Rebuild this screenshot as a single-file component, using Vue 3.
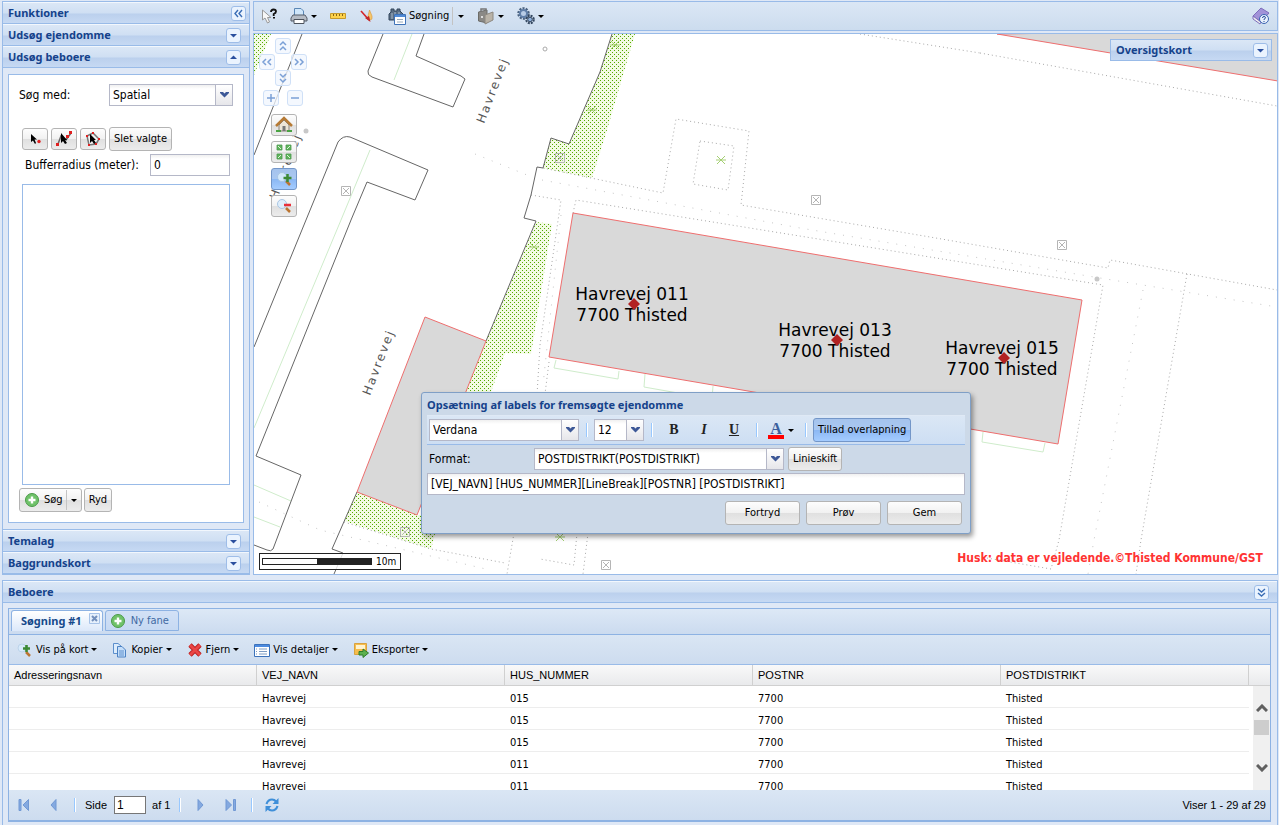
<template>
  <div class="viewport">
    <div class="top-row">
      <!-- Functions accordion -->
      <aside class="functions">
        <header class="panel-header">
          <h2>Funktioner</h2>
          <button class="tool-btn" aria-label="Skjul">
            <svg width="15" height="15" viewBox="0 0 15 15"><path d="M7 4L4 7.500L7 11M11 4L8 7.500L11 11" class="chevron" /></svg>
          </button>
        </header>
        <div class="accordion">
          <header class="panel-header">
            <h2>Udsøg ejendomme</h2>
            <button class="tool-btn" aria-label="Udvid Udsøg ejendomme">
              <svg width="15" height="15" viewBox="0 0 15 15"><path d="M4 6H11L7.500 9.500Z" class="arrow" /></svg>
            </button>
          </header>
          <header class="panel-header">
            <h2>Udsøg beboere</h2>
            <button class="tool-btn" aria-label="Skjul Udsøg beboere">
              <svg width="15" height="15" viewBox="0 0 15 15"><path d="M4 9H11L7.500 5.500Z" class="arrow" /></svg>
            </button>
          </header>
          <form class="search-form" @submit.prevent>
            <div class="search-box">
              <div class="field-row">
                <label for="search-mode">Søg med:</label>
                <div class="combo mode-combo">
                  <select id="search-mode" v-model="searchMode">
                    <option>Spatial</option>
                  </select>
                  <span class="trigger"><svg width="9" height="6" viewBox="0 0 9 6"><path d="M0 0H3L4.500 1.500L6 0H9V1L4.500 5.500L0 1Z" /></svg></span>
                </div>
              </div>
              <div class="select-tools">
                <button type="button" class="btn icon-btn" aria-label="Vælg punkt">
                  <svg width="18" height="16" viewBox="0 0 18 16">
                    <path d="M5 3V11L7 9.500L9 13L10 12L8.500 8.500H11Z" fill="#000" /><circle cx="13" cy="10.500" r="1.700" fill="#e02020" />
                  </svg>
                </button>
                <button type="button" class="btn icon-btn" aria-label="Vælg linje">
                  <svg width="18" height="16" viewBox="0 0 18 16">
                    <path d="M3 13L6 5L11 9L16 2" fill="none" stroke="#666" stroke-width="1.500" />
                    <path d="M6 2V12L8 10L10 13L12 12L10 9H12Z" fill="#000" />
                    <path d="M1 12H4V15H1ZM11 4H14V7H11ZM14 0H17V3H14Z" fill="#e02020" />
                  </svg>
                </button>
                <button type="button" class="btn icon-btn" aria-label="Vælg polygon">
                  <svg width="18" height="16" viewBox="0 0 18 16">
                    <path d="M3 5L9 2L15 8L12 13L5 14Z" fill="#f2f2f2" stroke="#777" stroke-width="1.500" />
                    <path d="M6 3V12L8 10L10 13L12 12L10 9H12Z" fill="#000" />
                    <path d="M2 4H4V6H2ZM8 1H10V3H8ZM14 7H16V9H14ZM11 12H13V14H11ZM4 13H6V15H4Z" fill="#e02020" />
                  </svg>
                </button>
                <button type="button" class="btn">Slet valgte</button>
              </div>
              <div class="field-row buffer-row">
                <label for="buffer">Bufferradius (meter):</label>
                <input id="buffer" v-model="buffer" type="text" class="text-field" />
              </div>
              <div class="result-list"></div>
              <div class="search-actions">
                <div class="split-btn btn">
                  <button type="submit" class="split-main">
                    <svg width="16" height="16" viewBox="0 0 16 16">
                      <circle cx="8" cy="8" r="6.500" fill="#6fc269" stroke="#4b9a49" /><path d="M8 4.500V11.500M4.500 8H11.500" stroke="#fff" stroke-width="2.400" />
                    </svg>
                    Søg
                  </button>
                  <button type="button" class="split-arrow" aria-label="Flere søgninger"><i class="caret"></i></button>
                </div>
                <button type="button" class="btn">Ryd</button>
              </div>
            </div>
          </form>
          <header v-for="title in ['Temalag', 'Baggrundskort']" :key="title" class="panel-header">
            <h2>{{ title }}</h2>
            <button class="tool-btn" :aria-label="'Udvid ' + title">
              <svg width="15" height="15" viewBox="0 0 15 15"><path d="M4 6H11L7.500 9.500Z" class="arrow" /></svg>
            </button>
          </header>
        </div>
      </aside>

      <main class="map-column">
        <nav class="main-toolbar">
          <button class="flat-btn" aria-label="Info">
            <svg width="16" height="16" viewBox="0 0 16 16">
              <path d="M1.500 2V12L4 10L6.500 15L8.500 14L6.500 9.500H10Z" fill="#f7f7f7" stroke="#999" />
              <path d="M10 4Q10 1.500 12.500 1.500Q15 1.500 15 3.500Q15 5 12.700 6V8" fill="none" stroke="#111" stroke-width="1.800" /><path d="M12 9H14V10.500H12Z" fill="#111" />
            </svg>
          </button>
          <button class="flat-btn" aria-label="Udskriv">
            <svg width="18" height="18" viewBox="0 0 18 18">
              <path d="M4.500 1.500H11L13.500 4V9H4.500Z" fill="#cfe6fa" stroke="#5b87b5" />
              <path d="M3 8H15L17 11V14H1V11Z" fill="#b5bbc4" stroke="#555d68" /><path d="M4 12.500H14V16.500H4Z" fill="#fff" stroke="#4d535c" />
            </svg>
            <i class="caret"></i>
          </button>
          <button class="flat-btn" aria-label="Mål">
            <svg width="16" height="16" viewBox="0 0 16 16">
              <path d="M0.500 5.500H15.500V10.500H0.500Z" fill="#fdd24c" stroke="#c59a2c" /><path d="M3.500 6V8M6.500 6V8M9.500 6V8M12.500 6V8" stroke="#8a6512" />
            </svg>
          </button>
          <button class="flat-btn" aria-label="Tegn">
            <svg width="16" height="16" viewBox="0 0 16 16">
              <path d="M2 3L10 12" stroke="#d3242a" stroke-width="1.600" /><path d="M9 8L10.500 2L13 8Q13.500 12 11.500 12Z" fill="#f5c76b" stroke="#d9963a" stroke-width="0.600" /><path d="M10 8L11.500 14L6 10Z" fill="#c22727" />
            </svg>
          </button>
          <button class="flat-btn">
            <svg width="18" height="18" viewBox="0 0 18 18">
              <path d="M3 2H6V4H9V2H12V4L15 7V13H1V7L3 5Z" fill="#5b6e84" stroke="#33475c" /><path d="M4 6V12M7 5V9M11 5V8" stroke="#a8bacd" />
              <path d="M6.500 7.500H17.500V17.500H6.500Z" fill="#fff" stroke="#3f73b8" /><path d="M7 8H17V10H7Z" fill="#4f8ad6" /><path d="M9 12.500H15M9 15H15" stroke="#9ab" />
            </svg>
            <span>Søgning</span>
            <i class="divider"></i>
            <i class="caret"></i>
          </button>
          <button class="flat-btn" aria-label="Værktøjer">
            <svg width="18" height="18" viewBox="0 0 18 18">
              <path d="M1.500 5L10 3V16L1.500 14Z" fill="#8a8986" stroke="#6c6c68" /><path d="M4 5V2H9V4" fill="none" stroke="#777" stroke-width="1.500" />
              <path d="M8 8L16 5V13L8 17Z" fill="#b9b3a8" stroke="#8d8880" /><path d="M4 9H6V11H4Z" fill="#ddd" />
            </svg>
            <i class="caret"></i>
          </button>
          <button class="flat-btn" aria-label="Indstillinger">
            <svg width="18" height="18" viewBox="0 0 18 18">
              <circle cx="6.500" cy="6.500" r="5" fill="none" stroke="#48607e" stroke-width="2.500" stroke-dasharray="2 1.140" /><circle cx="6.500" cy="6.500" r="3.500" fill="#b8cce6" stroke="#5f7ea8" stroke-width="2" />
              <circle cx="13" cy="12.500" r="3.800" fill="none" stroke="#33465f" stroke-width="2" stroke-dasharray="2 1" /><circle cx="13" cy="12.500" r="2.300" fill="#8fb0da" stroke="#33465f" />
            </svg>
            <i class="caret"></i>
          </button>
          <button class="flat-btn help" aria-label="Hjælp">
            <svg width="18" height="18" viewBox="0 0 18 18">
              <path d="M1 9L9 1L17 6L9 15Z" fill="#a192d8" stroke="#7d6dbb" /><path d="M1 9V12L8 17L9 15Z" fill="#eee" stroke="#7d6dbb" />
              <circle cx="12" cy="12" r="4.500" fill="#e8f0fc" stroke="#3a63b0" /><path d="M10.500 11Q10.500 9.500 12 9.500Q13.500 9.500 13.500 10.800Q13.500 11.600 12 12.300V13M12 14V15" fill="none" stroke="#234a96" />
            </svg>
          </button>
        </nav>

        <section class="map">
          <svg class="map-canvas" width="100%" height="100%">
            <defs>
              <pattern id="grass" width="4" height="4" patternUnits="userSpaceOnUse">
                <rect width="4" height="4" fill="#f3fbe4" />
                <path d="M0 0H1V1H0ZM2 2H3V3H2Z" fill="#55aa00" shape-rendering="crispEdges" />
              </pattern>
              <g id="manhole" fill="none" stroke="#b5b5b5">
                <path d="M-4.500 -4.500H4.500V4.500H-4.500ZM-3 -3L3 3M3 -3L-3 3" />
              </g>
              <path id="tree" d="M-4 -4L4 4M4 -4L-4 4M-5 0H5" fill="none" stroke="#a4cf72" />
            </defs>
            <!-- drawn in screen coordinates, moved back by the map's own origin -->
            <g transform="translate(-254 -34)">
              <g fill="url(#grass)">
                <path d="M254 34H271L254 75Z" />
                <path d="M612 34H635L620 85L607 130L592 178L543 168L551 138L569 144L600 72Z" />
                <path d="M536 222L552 224L531 354L505 353L488 400L460 404L486 341Z" />
                <path d="M357 492L417 515L440 515L431 549L344 521Z" />
              </g>
              <g fill="none" stroke="#cfeccb">
                <path d="M412 34L394 80M370 150L341 220L254 428M254 485L291 501M254 517L280 527" />
                <path d="M556 360L554 368L618 379L619 371M645 374L644 387L712 399L713 386M983 432L982 442L1043 452L1045 443" />
              </g>
              <g fill="none" stroke="#a8a8a8" stroke-dasharray="1 3">
                <path d="M543 168L663 193L676 119L749 131L741 205L930 237L1108 268L1110 260L1277 290" />
                <path d="M700 141L734 146L728 190L693 184Z" />
                <path d="M531 195L561 200L540 345L537 395M573 213L576 200L930 257L1103 285L1059 540L1051 569L975 556" />
                <path d="M980 53L1277 106M860 34L980 53M1187 274L1141 540L1136 574" />
                <path d="M344 522L431 549L505 563M549 362L545 394M514 533L507 574M577 533L574 565L540 559M588 533L583 574" />
              </g>
              <g fill="none" stroke="#c6c6c6" stroke-dasharray="1 8">
                <path d="M475 154L527 175M542 180L800 228L1100 278L1277 307M259 502L320 530L490 570" />
                <path d="M561 215L543 385M1143 290L1094 540L1088 574" />
              </g>
              <g fill="none" stroke="#666">
                <path d="M302 34L254 155" />
                <path d="M383 34L368 71Q367 75 372 77L453 107L465 79L461 76L416 56L424 34" />
                <path d="M254 347L306 220L338 142Q343 135 350 137L428 170L415 200L367 182L351 220L256 456L301 475L273 549Q271 552 267 550L254 545" />
                <path d="M612 34L600 72L569 144L551 138L543 168L537 167L531 195L524 218L536 221L486 341M357 492L332 549L343 553L334 574" />
              </g>
              <g fill="#d9d9d9" stroke="#ee6e6e">
                <path d="M997 34L1278 81V30Z" />
                <path d="M573 213L1082 300L1058 444L549 357Z" />
                <path d="M425 317L486 341L417 515L357 492Z" />
              </g>
              <use v-for="(m, i) in manholes" :key="'m' + i" href="#manhole" :x="m[0]" :y="m[1]" />
              <use v-for="(t, i) in trees" :key="'t' + i" href="#tree" :x="t[0]" :y="t[1]" />
              <circle cx="306" cy="131" r="2.500" fill="#c8c8c8" />
              <circle cx="1097" cy="279" r="2.500" fill="#c8c8c8" />
              <circle cx="545" cy="49" r="2" fill="none" stroke="#aaa" />
              <text v-for="(s, i) in streets" :key="'s' + i" class="street" :transform="`translate(${s[0]} ${s[1]}) rotate(-69)`">Havrevej</text>
              <g v-for="p in properties" :key="p.number" class="property">
                <text :x="p.x" :y="p.y - 3">Havrevej {{ p.number }}</text>
                <text :x="p.x" :y="p.y + 18">7700 Thisted</text>
                <path :d="`M${p.x + 2} ${p.y - 5}l6 6l-6 6l-6 -6Z`" />
              </g>
            </g>
          </svg>

          <div class="pan-pad">
            <button v-for="p in panButtons" :key="p.name" class="pan-btn" :class="p.name" :aria-label="p.label">
              <svg width="14" height="14" viewBox="0 0 14 14"><path :d="p.d" /></svg>
            </button>
          </div>
          <div class="map-tools">
            <button class="btn icon-btn" aria-label="Hjem">
              <svg width="18" height="18" viewBox="0 0 18 18">
                <path d="M4 9L9 4L14 9V15H4Z" fill="#ece4d6" stroke="#8a8378" /><path d="M1 10L9 2L17 10" fill="none" stroke="#b67a35" stroke-width="2.500" />
                <path d="M7.500 10H10.500V15H7.500Z" fill="#777" /><path d="M1 14H6V16H1ZM12 14H17V16H12Z" fill="#4aa343" />
              </svg>
            </button>
            <button class="btn icon-btn" aria-label="Hele kortet">
              <svg width="18" height="18" viewBox="0 0 18 18">
                <path d="M2 2H7V7H2ZM11 2H16V7H11ZM2 11H7V16H2ZM11 11H16V16H11Z" fill="#5fb45b" stroke="#4b9a4e" stroke-width="0.800" /><path d="M3 3L6 6M15 3L12 6M3 15L6 12M15 15L12 12" stroke="#dff3dc" />
              </svg>
            </button>
            <button class="btn icon-btn pressed" aria-label="Zoom ind">
              <svg width="18" height="16" viewBox="0 0 18 16">
                <circle cx="7" cy="6" r="4.500" fill="#d2e8fb" stroke="#a9c6e4" /><path d="M11 10L15 14" stroke="#bb7431" stroke-width="2.500" /><path d="M12.500 3V11M8.500 7H16.500" stroke="#3c8a35" stroke-width="2.500" />
              </svg>
            </button>
            <button class="btn icon-btn" aria-label="Zoom ud">
              <svg width="18" height="16" viewBox="0 0 18 16">
                <circle cx="7" cy="6" r="4.500" fill="#dfeefb" stroke="#a9c6e4" /><path d="M11 10L15 14" stroke="#bb7431" stroke-width="2.500" /><path d="M9 7H16" stroke="#e8303a" stroke-width="2.500" />
              </svg>
            </button>
          </div>

          <header class="overview panel-header">
            <h2>Oversigtskort</h2>
            <button class="tool-btn" aria-label="Udvid Oversigtskort">
              <svg width="15" height="15" viewBox="0 0 15 15"><path d="M4 6H11L7.500 9.500Z" class="arrow" /></svg>
            </button>
          </header>

          <div class="scale"><span class="scale-bar"></span>10m</div>
          <p class="disclaimer">Husk: data er vejledende.©Thisted Kommune/GST</p>

          <!-- Label setup window -->
          <div class="dialog" role="dialog" aria-labelledby="dialog-title">
            <h2 id="dialog-title">Opsætning af labels for fremsøgte ejendomme</h2>
            <div class="format-toolbar">
              <div class="combo font-combo">
                <select v-model="font" aria-label="Skrifttype"><option>Verdana</option></select>
                <span class="trigger"><svg width="9" height="6" viewBox="0 0 9 6"><path d="M0 0H3L4.500 1.500L6 0H9V1L4.500 5.500L0 1Z" /></svg></span>
              </div>
              <i class="separator"></i>
              <div class="combo size-combo">
                <select v-model="fontSize" aria-label="Størrelse"><option>12</option></select>
                <span class="trigger"><svg width="9" height="6" viewBox="0 0 9 6"><path d="M0 0H3L4.500 1.500L6 0H9V1L4.500 5.500L0 1Z" /></svg></span>
              </div>
              <i class="separator"></i>
              <button class="style-btn bold">B</button>
              <button class="style-btn italic">I</button>
              <button class="style-btn underline">U</button>
              <i class="separator"></i>
              <button class="color-btn" aria-label="Farve"><span>A</span><i class="caret"></i></button>
              <i class="separator"></i>
              <button class="btn pressed">Tillad overlapning</button>
            </div>
            <div class="format-row">
              <label for="format">Format:</label>
              <div class="combo">
                <select id="format" v-model="format"><option>POSTDISTRIKT(POSTDISTRIKT)</option></select>
                <span class="trigger"><svg width="9" height="6" viewBox="0 0 9 6"><path d="M0 0H3L4.500 1.500L6 0H9V1L4.500 5.500L0 1Z" /></svg></span>
              </div>
              <button class="btn">Linieskift</button>
            </div>
            <input v-model="template" type="text" class="text-field template-field" aria-label="Labelskabelon" />
            <div class="dialog-actions">
              <button class="btn">Fortryd</button>
              <button class="btn">Prøv</button>
              <button class="btn">Gem</button>
            </div>
          </div>
        </section>
      </main>
    </div>

    <!-- Residents grid -->
    <section class="residents">
      <header class="panel-header">
        <h2>Beboere</h2>
        <button class="tool-btn" aria-label="Skjul Beboere">
          <svg width="15" height="15" viewBox="0 0 15 15"><path d="M4 4L7.500 7L11 4M4 8L7.500 11L11 8" class="chevron" /></svg>
        </button>
      </header>
      <div class="tab-panel">
        <div class="tabs">
          <div class="tab active">
            <button class="tab-label">Søgning #1</button>
            <button class="tab-close" aria-label="Luk fane">
              <svg width="11" height="11" viewBox="0 0 11 11"><path d="M0.500 0.500H10.500V10.500H0.500Z" fill="#e6f0fc" stroke="#a7c3e8" /><path d="M3 3L8 8M8 3L3 8" stroke="#7390bd" stroke-width="2" /></svg>
            </button>
          </div>
          <button class="tab">
            <svg width="16" height="16" viewBox="0 0 16 16">
              <circle cx="8" cy="8" r="6.500" fill="#6fc269" stroke="#4b9a49" /><path d="M8 4.500V11.500M4.500 8H11.500" stroke="#fff" stroke-width="2.400" />
            </svg>
            Ny fane
          </button>
        </div>
        <div class="grid-toolbar">
          <button class="flat-btn">
            <svg width="16" height="16" viewBox="0 0 16 16">
              <circle cx="5" cy="6" r="4" fill="#d8ebfb" stroke="#bcd3ea" /><path d="M9 10L13 14" stroke="#bb7431" stroke-width="2.500" /><path d="M9.500 3V10M6 6.500H13" stroke="#3c8a35" stroke-width="2.600" />
            </svg>
            <span>Vis på kort</span><i class="caret"></i>
          </button>
          <button class="flat-btn">
            <svg width="16" height="16" viewBox="0 0 16 16">
              <path d="M1.500 1.500H6L9 4V11.500H1.500Z" fill="#dcecfc" stroke="#5c8fcd" /><path d="M5.500 4.500H10L13.500 8V15H5.500Z" fill="#c4defa" stroke="#4c82c4" /><path d="M7 9H12M7 11H12M7 13H12" stroke="#5c8fcd" />
            </svg>
            <span>Kopier</span><i class="caret"></i>
          </button>
          <button class="flat-btn">
            <svg width="16" height="16" viewBox="0 0 16 16"><path d="M3 3L13 13M13 3L3 13" stroke="#b81c1c" stroke-width="4.600" /><path d="M3 3L13 13M13 3L3 13" stroke="#ea4646" stroke-width="3" /></svg>
            <span>Fjern</span><i class="caret"></i>
          </button>
          <button class="flat-btn">
            <svg width="16" height="16" viewBox="0 0 16 16">
              <path d="M0.500 2.500H15.500V14.500H0.500Z" fill="#fff" stroke="#3c72bb" /><path d="M1 3H15V5H1Z" fill="#4b8ae0" /><path d="M2 7H3M2 9.500H3M2 12H3M5 7H13M5 9.500H13M5 12H13" stroke="#7d9cc4" />
            </svg>
            <span>Vis detaljer</span><i class="caret"></i>
          </button>
          <button class="flat-btn">
            <svg width="16" height="16" viewBox="0 0 16 16">
              <path d="M1.500 1.500H13.500V12.500H1.500Z" fill="#f6bd4c" stroke="#d9a23f" /><path d="M3 3H12V7H3Z" fill="#fff3cf" /><path d="M6 9.500H10V7L15.500 11L10 15.500V13H6Z" fill="#5cb04f" stroke="#2f7c2b" />
            </svg>
            <span>Eksporter</span><i class="caret"></i>
          </button>
        </div>
        <div class="grid">
          <table>
            <colgroup>
              <col v-for="c in columns" :key="c" />
              <col class="scroll-col" />
            </colgroup>
            <thead>
              <tr>
                <th v-for="c in columns" :key="c" scope="col">{{ c }}</th>
                <td></td>
              </tr>
            </thead>
            <tbody>
              <tr v-for="(r, i) in rows" :key="i">
                <td></td>
                <td>Havrevej</td>
                <td>{{ r }}</td>
                <td>7700</td>
                <td>Thisted</td>
              </tr>
            </tbody>
          </table>
          <div class="scrollbar">
            <svg width="12" height="8" viewBox="0 0 12 8"><path d="M1 7L6 2L11 7" /></svg>
            <span class="thumb"></span>
            <svg width="12" height="8" viewBox="0 0 12 8"><path d="M1 1L6 6L11 1" /></svg>
          </div>
        </div>
        <footer class="pager">
          <button class="page-btn" aria-label="Første side"><svg width="12" height="12" viewBox="0 0 12 12"><path d="M1 0.500H3V11.500H1ZM10.500 0.500V11.500L5 6Z" /></svg></button>
          <button class="page-btn" aria-label="Forrige side"><svg width="12" height="12" viewBox="0 0 12 12"><path d="M8 0.500V11.500L3 6Z" /></svg></button>
          <i class="separator"></i>
          <label for="page">Side</label>
          <input id="page" v-model="page" type="text" />
          <span>af 1</span>
          <i class="separator"></i>
          <button class="page-btn" aria-label="Næste side"><svg width="12" height="12" viewBox="0 0 12 12"><path d="M3 0.500V11.500L8 6Z" /></svg></button>
          <button class="page-btn" aria-label="Sidste side"><svg width="12" height="12" viewBox="0 0 12 12"><path d="M1 0.500V11.500L6.500 6ZM8.500 0.500H10.500V11.500H8.500Z" /></svg></button>
          <i class="separator"></i>
          <button class="refresh" aria-label="Opdater">
            <svg width="16" height="16" viewBox="0 0 16 16">
              <path d="M2.500 7Q4 2.500 8 2.500Q10.500 2.500 12 4.500M13.500 9Q12 13.500 8 13.500Q5.500 13.500 4 11.500" fill="none" stroke="#3f8fd9" stroke-width="2.200" />
              <path d="M14.500 1V7H8.500ZM1.500 15V9H7.500Z" fill="#3f8fd9" />
            </svg>
          </button>
          <span class="page-info">Viser 1 - 29 af 29</span>
        </footer>
      </div>
    </section>
  </div>
</template>

<script setup>
import { ref } from "vue";

const searchMode = ref("Spatial");
const buffer = ref("0");
const font = ref("Verdana");
const fontSize = ref("12");
const format = ref("POSTDISTRIKT(POSTDISTRIKT)");
const template = ref("[VEJ_NAVN] [HUS_NUMMER][LineBreak][POSTNR] [POSTDISTRIKT]");
const page = ref("1");

const columns = ["Adresseringsnavn", "VEJ_NAVN", "HUS_NUMMER", "POSTNR", "POSTDISTRIKT"];
const rows = ["015", "015", "015", "011", "011"];

// Map content
const properties = [
  { number: "011", x: 632, y: 303 },
  { number: "013", x: 835, y: 339 },
  { number: "015", x: 1002, y: 357 },
];
const streets = [[484, 124], [370, 396], [277, 200]];
const manholes = [[346, 191], [816, 200], [1062, 245], [560, 158], [606, 565], [405, 532]];
const trees = [[721, 160], [592, 110], [615, 45], [534, 247], [560, 537]];

const panButtons = [
  { name: "up", label: "Op", d: "M4 6L7 3L10 6M4 11L7 8L10 11" },
  { name: "left", label: "Venstre", d: "M6 4L3 7L6 10M11 4L8 7L11 10" },
  { name: "right", label: "Højre", d: "M3 4L6 7L3 10M8 4L11 7L8 10" },
  { name: "down", label: "Ned", d: "M4 3L7 6L10 3M4 8L7 11L10 8" },
  { name: "plus", label: "Zoom ind", d: "M7 3V11M3 7H11" },
  { name: "minus", label: "Zoom ud", d: "M3 7H11" },
];
</script>

<style>
body {
  margin: 0;
  background: #dfe8f6;
}
</style>

<style scoped>
* {
  box-sizing: border-box;
}

.viewport {
  height: 100vh;
  display: flex;
  flex-direction: column;
  gap: 5px;
  padding: 1px 1px 0 2px;
  overflow: hidden;
  background: #dfe8f6;
  color: #000;
  font: 11px/16px "DejaVu Sans Condensed", Tahoma, sans-serif;
}

button,
input,
select {
  font: inherit;
  color: inherit;
  margin: 0;
}

button {
  display: flex;
  align-items: center;
  justify-content: center;
  padding: 0;
  border: none;
  background: none;
  cursor: pointer;
}

svg {
  display: block;
  flex: none;
}

h2 {
  margin: 0;
  color: #15428b;
  font: bold 11px/16px "Noto Sans", Tahoma, sans-serif;
}

.top-row {
  flex: 1;
  min-height: 0;
  display: flex;
  gap: 3px;
}

/* Panel headers */
.panel-header {
  flex: none;
  height: 22px;
  display: flex;
  align-items: center;
  justify-content: space-between;
  padding: 0 8px 0 5px;
  border-bottom: 1px solid #99bbe8;
  border-top: 1px solid #f2f7fd;
  background: linear-gradient(#dbe7f6, #cfdff3 50%, #bbd0ed 55%, #c6d9f3);
}

.tool-btn {
  width: 15px;
  height: 15px;
  border: 1px solid #9ebde8;
  border-radius: 3px;
  background: #eaf3fe;
}

.arrow {
  fill: #2a4f9e;
}

.chevron {
  fill: none;
  stroke: #3a6db5;
  stroke-width: 1.4;
}

/* Left accordion */
.functions {
  width: 248px;
  display: flex;
  flex-direction: column;
  border: 1px solid #99bbe8;
}

.functions > .panel-header {
  padding-right: 3px;
}

.accordion {
  flex: 1;
  min-height: 0;
  display: flex;
  flex-direction: column;
}

.search-form {
  flex: 1;
  min-height: 0;
  display: flex;
  padding: 6px 5px;
  border-bottom: 1px solid #99bbe8;
}

.search-box {
  flex: 1;
  display: flex;
  flex-direction: column;
  padding: 9px 10px 10px;
  border: 1px solid #99bbe8;
  background: #fff;
  font-size: 12px;
}

.field-row {
  display: flex;
  align-items: center;
  justify-content: space-between;
}

.combo {
  display: flex;
  height: 22px;
  border: 1px solid #b5b8c8;
  background: #fff;
}

.combo select {
  flex: 1;
  min-width: 0;
  padding: 0 3px;
  border: none;
  appearance: none;
  background: linear-gradient(#f0f0f0, #fff 4px);
  font-size: 12px;
}

.trigger {
  width: 17px;
  display: flex;
  align-items: center;
  justify-content: center;
  border-left: 1px solid #b5b8c8;
  background: linear-gradient(#fff, #e6e6ea);
}

.trigger svg {
  fill: #3d5897;
}

.mode-combo {
  width: 124px;
}

.text-field {
  height: 22px;
  padding: 0 3px;
  border: 1px solid #b5b8c8;
  background: linear-gradient(#f0f0f0, #fff 4px);
  font-size: 12px;
}

.btn {
  height: 24px;
  padding: 0 4px;
  border: 1px solid #b4b4b4;
  border-radius: 3px;
  background: linear-gradient(#fdfdfd, #f1f1f1 50%, #e0e0e0 52%, #ececec);
  font-size: 11px;
  white-space: nowrap;
}

.icon-btn {
  width: 26px;
  height: 22px;
  padding: 0;
}

.pressed {
  border-color: #7396c8;
  background: linear-gradient(#a5c3ec, #a9c8f2 50%, #8cb8f4 52%, #a4ccff);
}

.select-tools {
  display: flex;
  align-items: center;
  gap: 3px;
  margin: 21px 3px 3px;
}

.buffer-row {
  padding: 0 3px 0 6px;
}

.buffer-row .text-field {
  width: 80px;
}

.result-list {
  flex: 1;
  margin: 8px 3px 3px;
  border: 1px solid #99bbe8;
}

.search-actions {
  display: flex;
  gap: 2px;
}

.split-btn {
  display: flex;
  align-items: center;
  padding: 0;
}

.split-main {
  gap: 4px;
  padding: 0 3px 0 4px;
}

.split-arrow {
  width: 15px;
  height: 20px;
  border-left: 1px solid #c4c4c4;
}

.caret {
  border: 3px solid transparent;
  border-top-color: #000;
  border-bottom-width: 0;
}

/* Map column */
.map-column {
  flex: 1;
  min-width: 0;
  display: flex;
  flex-direction: column;
  gap: 2px;
}

.main-toolbar {
  height: 30px;
  display: flex;
  align-items: center;
  gap: 13px;
  padding: 0 7px;
  border: 1px solid #99bbe8;
  background: linear-gradient(#dbe7f5, #ccdcee);
}

.flat-btn {
  gap: 3px;
}

.divider {
  width: 1px;
  height: 18px;
  margin-right: 2px;
  background: #c3c3c3;
}

.help {
  margin-left: auto;
}

.map {
  position: relative;
  flex: 1;
  min-height: 0;
  overflow: hidden;
  border: 1px solid #99bbe8;
  background: #fff;
}

.street {
  fill: #555;
  font: 12px "DejaVu Sans", sans-serif;
  letter-spacing: 2px;
}

.property {
  fill: #000;
  font: 17px "DejaVu Sans", Verdana, sans-serif;
  text-anchor: middle;
}

.property path {
  fill: #b22222;
}

.pan-pad {
  position: absolute;
  top: 4px;
  left: 5px;
  display: grid;
  grid-template: repeat(3, 16px) 20px / repeat(12, 4px);
  align-items: end;
}

.pan-btn {
  width: 16px;
  height: 16px;
  border: 1px solid #cfe0f7;
  border-radius: 3px;
  background: rgba(240, 246, 254, 0.75);
}

.pan-btn path {
  fill: none;
  stroke: #7ba0d6;
  stroke-width: 1.5;
}

.up {
  grid-area: 1 / 5 / 2 / 9;
}

.left {
  grid-area: 2 / 1 / 3 / 5;
}

.right {
  grid-area: 2 / 9 / 3 / 13;
}

.down {
  grid-area: 3 / 5 / 4 / 9;
}

.plus {
  grid-area: 4 / 2 / 5 / 6;
}

.minus {
  grid-area: 4 / 8 / 5 / 12;
}

.map-tools {
  position: absolute;
  top: 80px;
  left: 17px;
  display: flex;
  flex-direction: column;
  gap: 5px;
}

.overview {
  position: absolute;
  top: 5px;
  right: 5px;
  width: 162px;
  padding-right: 3px;
  border: 1px solid #99bbe8;
}

.scale {
  position: absolute;
  left: 5px;
  bottom: 4px;
  width: 142px;
  height: 17px;
  display: flex;
  align-items: center;
  gap: 4px;
  padding-left: 2px;
  border: 1px solid #222;
  background: rgba(255, 255, 255, 0.8);
  font-size: 10px;
}

.scale-bar {
  width: 110px;
  height: 7px;
  border: 1px solid #222;
  background: linear-gradient(90deg, #fff 50%, #222 50%);
}

.disclaimer {
  position: absolute;
  right: 14px;
  bottom: 8px;
  margin: 0;
  color: #ff3333;
  font: bold 12px/16px "DejaVu Sans Condensed", Tahoma, sans-serif;
}

/* Dialog */
.dialog {
  position: absolute;
  top: 358px;
  left: 167px;
  width: 550px;
  padding: 4px 5px 8px;
  border: 1px solid #7f9fc6;
  border-radius: 3px;
  background: #ccd9e8;
  box-shadow: 2px 3px 5px rgba(0, 0, 0, 0.4);
}

.format-toolbar {
  height: 30px;
  display: flex;
  align-items: center;
  margin-top: 2px;
  padding: 0 2px;
  border-top: 1px solid #dfe9f5;
  border-bottom: 1px solid #99bbe8;
  background: linear-gradient(#dbe7f5, #cddef3);
}

.font-combo {
  width: 150px;
}

.size-combo {
  width: 50px;
}

.separator {
  width: 2px;
  height: 14px;
  margin: 0 6px 0 7px;
  border-left: 1px solid #98c8ff;
  border-right: 1px solid #fff;
}

.style-btn {
  width: 30px;
  height: 22px;
  color: #222;
  font: bold 14px/16px "Liberation Serif", serif;
}

.italic {
  font-style: italic;
}

.underline {
  text-decoration: underline;
}

.color-btn {
  gap: 4px;
  padding: 0 4px;
}

.color-btn span {
  width: 16px;
  border-bottom: 4px solid #f00;
  color: #3c5f9d;
  font: bold 16px/13px "Liberation Serif", serif;
}

.format-row {
  display: flex;
  align-items: center;
  gap: 4px;
  padding: 2px 0;
}

.format-row label {
  width: 103px;
  padding-left: 2px;
  font-size: 12px;
}

.format-row .combo {
  width: 250px;
}

.template-field {
  width: 100%;
}

.dialog-actions {
  display: flex;
  justify-content: flex-end;
  gap: 6px;
  margin-top: 6px;
  padding-right: 3px;
}

.dialog-actions .btn {
  width: 75px;
}

/* Residents */
.residents {
  flex: none;
  display: flex;
  flex-direction: column;
  border: 1px solid #99bbe8;
  border-bottom: none;
}

.tab-panel {
  margin: 5px 6px 3px 5px;
  border: 1px solid #8db2e3;
  border-bottom-width: 2px;
}

.tabs {
  display: flex;
  align-items: flex-end;
  gap: 2px;
  height: 26px;
  padding: 0 2px 3px;
  border-bottom: 1px solid #8db2e3;
  background: linear-gradient(#dde8f6, #cbdbef);
}

.tab {
  height: 21px;
  display: flex;
  align-items: center;
  gap: 5px;
  padding: 0 9px 0 4px;
  border: 1px solid #8db2e3;
  border-radius: 3px 3px 0 0;
  background: linear-gradient(#d3e1f6, #c6d9f3);
  color: #416aa3;
}

.tab.active {
  gap: 7px;
  padding: 0 2px 0 9px;
  border-bottom: none;
  background: linear-gradient(#fff, #dbe8fa);
}

.tab-label {
  color: #15498b;
  font: bold 11px/16px "Noto Sans", Tahoma, sans-serif;
}

.tab-close {
  align-self: flex-start;
  margin-top: 2px;
}

.grid-toolbar {
  height: 29px;
  display: flex;
  align-items: center;
  gap: 15px;
  padding: 0 8px;
  background: linear-gradient(#dae6f4, #cddcef);
}

.grid {
  position: relative;
  height: 126px;
  overflow: hidden;
  border-top: 1px solid #99bbe8;
  background: #fff;
}

table {
  width: 100%;
  table-layout: fixed;
  border-collapse: separate;
  border-spacing: 0;
}

.scroll-col {
  width: 21px;
}

th,
td {
  height: 22px;
  padding: 0 5px;
  text-align: left;
  font-weight: normal;
  line-height: 16px;
}

th {
  border-right: 1px solid #d0d0d0;
  font-family: "Liberation Sans", Arial, sans-serif;
}

thead th,
thead td {
  height: 21px;
  border-bottom: 1px solid #d0d0d0;
  background: linear-gradient(#f9f9f9, #e9eaec);
}

tbody td {
  padding-top: 4px;
  border-bottom: 1px solid #ededed;
}

.scrollbar {
  position: absolute;
  top: 21px;
  right: 0;
  bottom: 0;
  width: 17px;
  display: flex;
  flex-direction: column;
  align-items: center;
  padding: 18px 0;
  background: #f0f0f0;
}

.scrollbar path {
  fill: none;
  stroke: #606060;
  stroke-width: 3;
}

.scrollbar .thumb {
  width: 15px;
  height: 15px;
  margin: 8px 0 auto;
  background: #cdcdcd;
}

.pager {
  height: 30px;
  display: flex;
  align-items: center;
  padding: 0 4px 0 9px;
  background: linear-gradient(#dae6f4, #cddcef);
  font-family: "Liberation Sans", Arial, sans-serif;
}

.pager .separator {
  margin: 0 9px;
}

.page-btn {
  width: 12px;
  margin-right: 18px;
}

.pager .page-btn + .separator {
  margin-left: -4px;
}

.page-btn path {
  fill: #84a9e0;
  stroke: #7198d4;
}

.pager input {
  width: 32px;
  height: 18px;
  margin: 0 6px 0 7px;
  padding: 0 2px;
  border: 1px solid #767676;
  background: #fff;
  font-size: 12px;
}

.separator + .page-btn {
  margin-left: 5px;
}

.separator + .refresh {
  margin-left: 2px;
}

.page-info {
  margin-left: auto;
}
</style>
